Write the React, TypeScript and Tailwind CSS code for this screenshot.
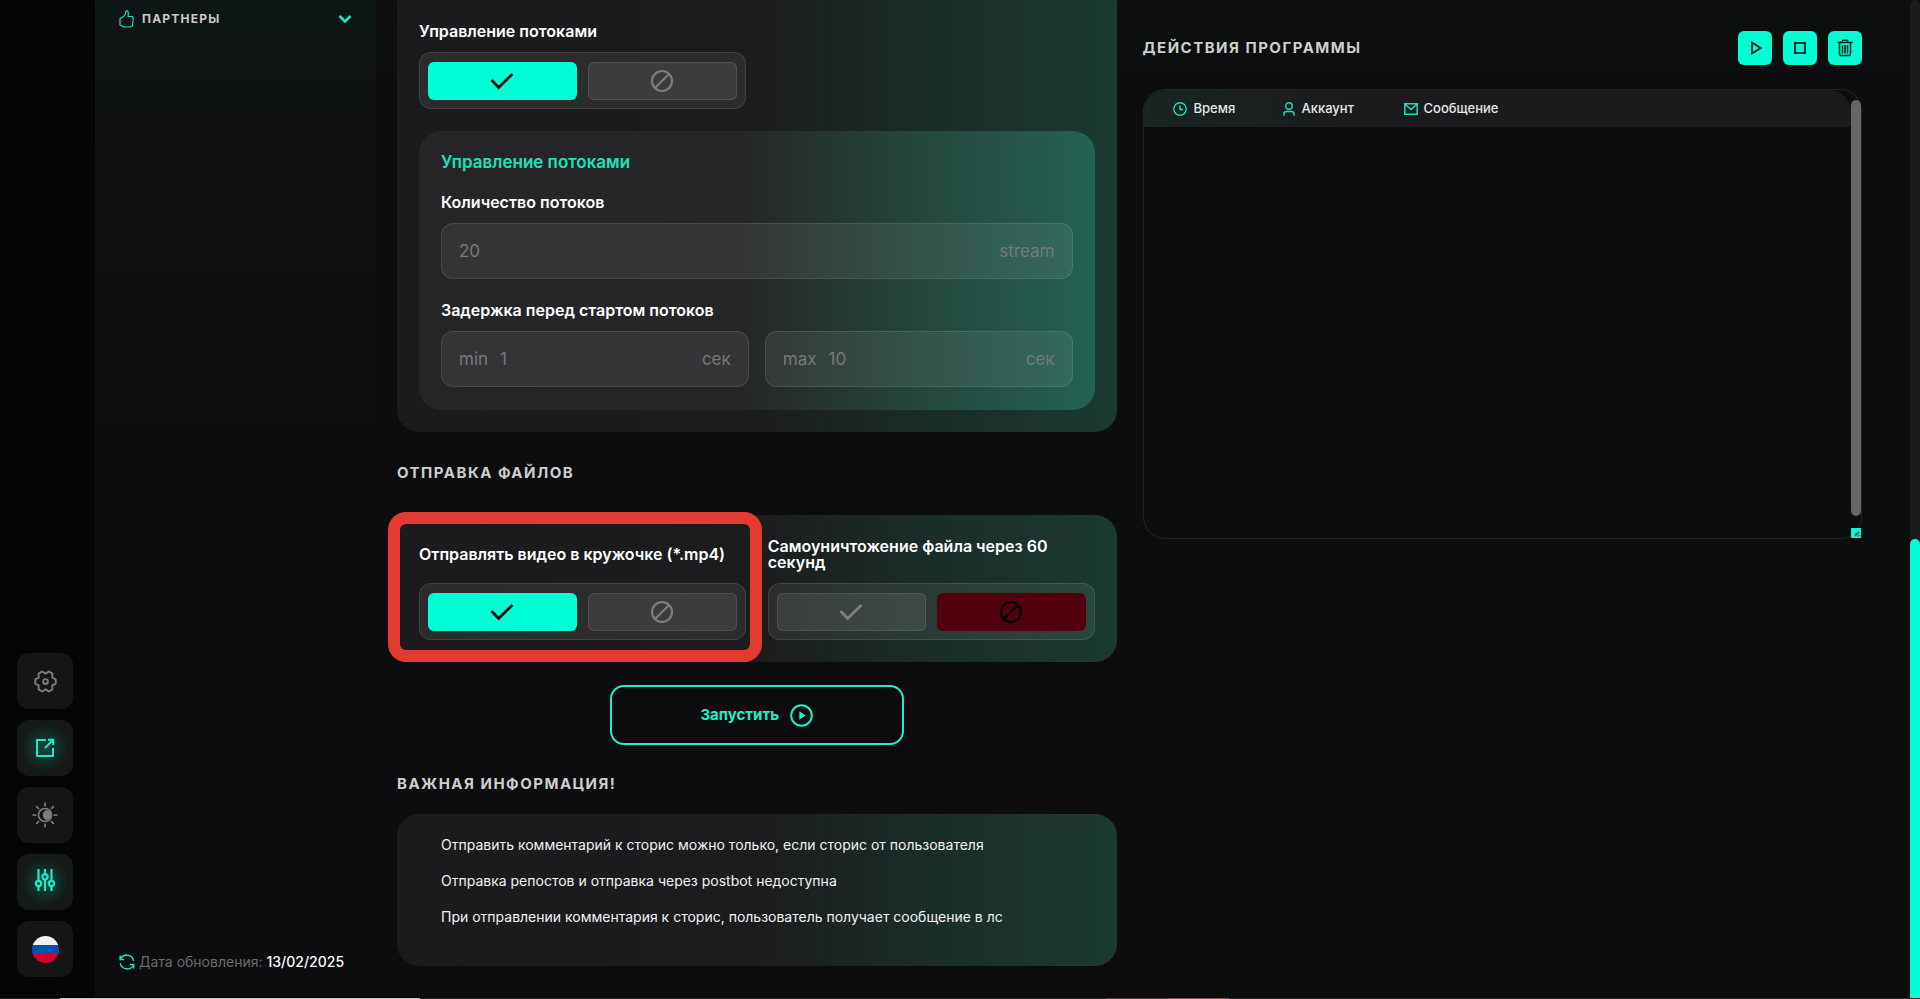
import React, { useState } from 'react';

function CheckIcon() {
  return (
    <svg width="24" height="18" viewBox="0 0 24 18" fill="none" stroke="currentColor" strokeWidth="2.8" aria-hidden="true">
      <path d="M1.5 8 L8.6 15.4 L22.5 2" strokeLinejoin="miter" />
    </svg>
  );
}

function BanIcon() {
  return (
    <svg width="24" height="24" viewBox="0 0 24 24" fill="none" stroke="currentColor" strokeWidth="2.2" aria-hidden="true">
      <circle cx="12" cy="12" r="10" />
      <path d="M5 19 L19 5" />
    </svg>
  );
}

function Toggle({ label, initial }: { label: string; initial: boolean }) {
  const [on, setOn] = useState(initial);
  const idle = 'border border-white/10 bg-white/[0.08] text-[#7d7d7d]';
  return (
    <div role="group" aria-label={label} className="grid h-[57px] grid-cols-2 items-center gap-[11px] rounded-xl border border-white/10 bg-white/[0.07] px-2">
      <button
        type="button"
        aria-label="Включить"
        aria-pressed={on}
        onClick={() => setOn(true)}
        className={`flex h-[38px] items-center justify-center rounded-md ${on ? 'bg-[#00ffd5] text-[#0d0d0f]' : idle}`}
      >
        <CheckIcon />
      </button>
      <button
        type="button"
        aria-label="Выключить"
        aria-pressed={!on}
        onClick={() => setOn(false)}
        className={`flex h-[38px] items-center justify-center rounded-md ${on ? idle : 'bg-[#52000e] text-black'}`}
      >
        <BanIcon />
      </button>
    </div>
  );
}

function Field({ id, prefix, placeholder, unit, label }: { id: string; prefix?: string; placeholder: string; unit: string; label?: string }) {
  return (
    <div className="flex h-14 min-w-0 flex-1 items-center gap-3 rounded-xl border border-white/10 bg-white/[0.07] px-[17px] pt-px text-[17px] text-[#77797a]">
      {prefix && <label htmlFor={id}>{prefix}</label>}
      <input
        id={id}
        aria-label={label}
        placeholder={placeholder}
        className="min-w-0 flex-1 bg-transparent text-white outline-none placeholder:text-[#77797a]"
      />
      <span>{unit}</span>
    </div>
  );
}

function SectionTitle({ children }: { children: React.ReactNode }) {
  return <h2 className="text-[15px] leading-6 font-bold tracking-widest text-[#cfcfcf] uppercase">{children}</h2>;
}

function RailButton({ label, active, children }: { label: string; active?: boolean; children: React.ReactNode }) {
  return (
    <button
      type="button"
      aria-label={label}
      className={`flex size-14 items-center justify-center rounded-xl bg-[#151516] ${active ? 'bg-[radial-gradient(circle,#0b4a3e_0%,#151918_60%)] text-[#1fe9c4]' : 'text-[#7d7d7d]'}`}
    >
      {children}
    </button>
  );
}

function Rail() {
  return (
    <nav aria-label="Настройки" className="flex w-[95px] shrink-0 flex-col justify-end gap-[11px] bg-[#050505] pb-[21px] pl-[17px]">
      <RailButton label="Настройки">
        <svg width="23" height="23" viewBox="0 0 24 24" fill="none" stroke="currentColor" strokeWidth="2" strokeLinejoin="round" aria-hidden="true">
          <path d="M22.7 9.8 V14.2 L19.1 16.1 L19.2 20.2 L15.4 22.4 L12 20.2 L8.6 22.4 L4.8 20.2 L4.9 16.1 L1.3 14.2 V9.8 L4.9 7.9 L4.8 3.8 L8.6 1.6 L12 3.8 L15.4 1.6 L19.2 3.8 L19.1 7.9 Z" />
          <circle cx="12" cy="12" r="2.5" />
        </svg>
      </RailButton>
      <RailButton label="Открыть в новом окне" active>
        <svg width="20" height="20" viewBox="0 0 20 20" fill="none" stroke="currentColor" strokeWidth="2" aria-hidden="true">
          <path d="M11 2 H2 V18 H18 V10" strokeLinejoin="round" />
          <path d="M10 10 L18 2 M13 1.8 H18.2 V7" />
        </svg>
      </RailButton>
      <RailButton label="Тема">
        <svg width="26" height="26" viewBox="0 0 26 26" fill="none" stroke="currentColor" strokeWidth="1.7" aria-hidden="true">
          <circle cx="13" cy="13" r="6.5" />
          <path d="M14.5 8 A5.4 5.4 0 0 1 14.5 18.2 A5.4 5.4 0 0 1 14.5 8 Z" fill="currentColor" stroke="none" />
          <circle cx="15.8" cy="13" r="4" fill="currentColor" stroke="none" />
          <path d="M13 .5 V4.5 M13 21.5 V25.5 M.5 13 H4.5 M21.5 13 H25.5 M4.2 4.2 L7 7 M19 19 L21.8 21.8 M4.2 21.8 L7 19 M19 7 L21.8 4.2" />
        </svg>
      </RailButton>
      <RailButton label="Параметры" active>
        <svg width="20" height="24" viewBox="0 0 20 24" fill="none" stroke="currentColor" strokeWidth="2.2" className="mb-1" aria-hidden="true">
          <path d="M3.5 1 V12.5 M3.5 18 V23 M10 1 V6 M10 11.5 V23 M16.5 1 V12.5 M16.5 18 V23" />
          <circle cx="3.5" cy="15.5" r="2.6" />
          <circle cx="10" cy="8.8" r="2.6" />
          <circle cx="16.5" cy="15.5" r="2.6" />
        </svg>
      </RailButton>
      <RailButton label="Русский язык">
        <span className="flex size-[27px] flex-col overflow-hidden rounded-full">
          <span className="flex-1 bg-[#f0f0f0]" />
          <span className="flex-1 bg-[#0052b4]" />
          <span className="flex-1 bg-[#d80027]" />
        </span>
      </RailButton>
    </nav>
  );
}

function Sidebar() {
  return (
    <aside className="flex w-[281px] shrink-0 flex-col justify-between bg-[linear-gradient(180deg,#0e1616_0%,#0f1112_12%,#0d0d0f_45%)] px-6 pt-2 pb-6">
      <button type="button" className="flex h-[22px] items-center text-[#1fe0bd]">
        <svg width="15" height="18" viewBox="0 0 15 18" fill="none" stroke="currentColor" strokeWidth="1.2" strokeLinejoin="round" aria-hidden="true">
          <path d="M1 8.5 L4.5 6.5 L6.5 4 L7 1 L8.5 .8 L9.3 2.5 L9.2 6.5 H13.5 L14.2 8 L13.5 16 L11 17 H5 L1 15 Z" />
        </svg>
        <span className="ml-2 flex-1 text-left text-xs font-bold tracking-widest text-[#c9c9c9]">ПАРТНЕРЫ</span>
        <svg width="14" height="10" viewBox="0 0 14 10" fill="none" stroke="#20e3c2" strokeWidth="2.6" aria-hidden="true">
          <path d="M1.5 2 L7 7.5 L12.5 2" />
        </svg>
      </button>
      <p className="flex items-center text-sm leading-6 whitespace-nowrap text-[#6a6a6c]">
        <svg width="16" height="16" viewBox="0 0 16 16" fill="none" stroke="#1fdcb9" strokeWidth="1.5" className="mr-1 shrink-0" aria-hidden="true">
          <path d="M1.2 1.5 V5.5 H5.2 M1.4 5.3 A7 7 0 0 1 14.7 7 M14.8 14.5 V10.5 H10.8 M14.6 10.7 A7 7 0 0 1 1.3 9" />
        </svg>
        <span>Дата обновления:</span>
        <time dateTime="2025-02-13" className="ml-1 font-medium text-white">13/02/2025</time>
      </p>
    </aside>
  );
}

function ActionButton({ label, children }: { label: string; children: React.ReactNode }) {
  return (
    <button type="button" aria-label={label} className="flex size-[34px] items-center justify-center rounded-md bg-[#00ffd5] text-[#08251f]">
      {children}
    </button>
  );
}

function LogPanel() {
  return (
    <section className="min-w-0 flex-1 pt-[31px]">
      <div className="flex items-center justify-between">
        <SectionTitle>Действия программы</SectionTitle>
        <div className="flex gap-[11px]">
          <ActionButton label="Запуск">
            <svg width="12" height="14" viewBox="0 0 12 14" fill="none" stroke="currentColor" strokeWidth="1.9" className="ml-0.5" aria-hidden="true">
              <path d="M2 1.5 L10.5 7 L2 12.5 Z" />
            </svg>
          </ActionButton>
          <ActionButton label="Стоп">
            <svg width="12" height="12" viewBox="0 0 12 12" fill="none" stroke="currentColor" strokeWidth="1.8" aria-hidden="true">
              <rect x="1" y="1" width="10" height="10" />
            </svg>
          </ActionButton>
          <ActionButton label="Очистить">
            <svg width="16" height="18" viewBox="0 0 16 18" fill="none" stroke="currentColor" strokeWidth="1.5" aria-hidden="true">
              <path d="M.5 3.5 H15.5 M5 3 L5.7 1.2 H10.3 L11 3 M2.5 4 V14.5 Q2.5 16.6 4.5 16.6 H11.5 Q13.5 16.6 13.5 14.5 V4 M5.5 6 V14.5 M8 6 V14.5 M10.5 6 V14.5" />
            </svg>
          </ActionButton>
        </div>
      </div>
      <div className="mt-6 flex h-[450px] rounded-[22px] border border-[#242426]">
        <div className="min-w-0 flex-1">
          <div className="rounded-t-[22px] bg-[linear-gradient(90deg,#182521_0%,#1b1b1d_30%)]">
            <table className="w-full table-fixed text-left text-[13px] text-[#e6e6e6]">
              <thead>
                <tr className="h-[37px]">
                  <th className="w-[139px] pl-[29px] font-medium">
                    <span className="flex items-center gap-[7px]">
                      <svg width="14" height="14" viewBox="0 0 14 14" fill="none" stroke="#1fdcb9" strokeWidth="1.4" aria-hidden="true">
                        <circle cx="7" cy="7" r="6.2" />
                        <path d="M7 3.5 V7.5 H10" />
                      </svg>
                      Время
                    </span>
                  </th>
                  <th className="w-[121px] font-medium">
                    <span className="flex items-center gap-[7px]">
                      <svg width="12" height="14" viewBox="0 0 12 14" fill="none" stroke="#1fdcb9" strokeWidth="1.4" aria-hidden="true">
                        <circle cx="6" cy="4" r="3.3" />
                        <path d="M1 13.8 V12 Q1 9.5 3.5 9.5 H8.5 Q11 9.5 11 12 V13.8" />
                      </svg>
                      Аккаунт
                    </span>
                  </th>
                  <th className="font-medium">
                    <span className="flex items-center gap-[6px]">
                      <svg width="14" height="12" viewBox="0 0 14 12" fill="none" stroke="#1fdcb9" strokeWidth="1.5" aria-hidden="true">
                        <path d="M.8 .8 H13.2 V11.2 H.8 Z M1.5 1.5 L7 6.5 L12.5 1.5" />
                      </svg>
                      Сообщение
                    </span>
                  </th>
                </tr>
              </thead>
            </table>
          </div>
        </div>
        <div aria-hidden="true" className="flex w-[10px] flex-col justify-between pt-[10px]">
          <span className="h-[416px] rounded-full bg-[#666668]" />
          <svg width="10" height="10" viewBox="0 0 10 10">
            <rect width="10" height="10" fill="#10f5cd" />
            <path d="M4 8 L8 4 M7 8.5 L8.5 7 M4.5 6 L6 5" stroke="#08584b" strokeWidth="1.4" />
          </svg>
        </div>
      </div>
    </section>
  );
}

const cardBg = 'bg-[linear-gradient(90deg,#1b1b1d_0%,#1c1c1e_50%,#1b2a27_70%,#1b3a31_100%)]';

const notes = [
  'Отправить комментарий к сторис можно только, если сторис от пользователя',
  'Отправка репостов и отправка через postbot недоступна',
  'При отправлении комментария к сторис, пользователь получает сообщение в лс',
];

function Settings() {
  return (
    <div className="flex min-w-0 flex-1 flex-col">
      <section className={`rounded-b-[22px] px-[22px] pb-[22px] ${cardBg}`}>
        <div className="grid grid-cols-2 gap-[22px] pt-[19px]">
          <div>
            <h3 className="mb-[9px] text-base leading-6 font-semibold text-white">Управление потоками</h3>
            <Toggle label="Управление потоками" initial={true} />
          </div>
        </div>
        <div className="mt-[22px] rounded-[22px] bg-[linear-gradient(90deg,#252527_0%,#262628_48%,#25473e_75%,#236252_100%)] px-[22px] pt-[19px] pb-[23px]">
          <h3 className="text-[17px] leading-6 font-semibold text-[#1fe0b8]">Управление потоками</h3>
          <label htmlFor="threads" className="mt-4 mb-[9px] block text-base leading-6 font-semibold text-white">Количество потоков</label>
          <Field id="threads" placeholder="20" unit="stream" />
          <h4 className="mt-[19px] mb-[9px] text-base leading-6 font-semibold text-white">Задержка перед стартом потоков</h4>
          <div className="flex gap-4">
            <Field id="delay-min" prefix="min" placeholder="1" unit="сек" />
            <Field id="delay-max" prefix="max" placeholder="10" unit="сек" />
          </div>
        </div>
      </section>

      <div className="mt-[29px]">
        <SectionTitle>Отправка файлов</SectionTitle>
      </div>
      <section className={`relative mt-[30px] grid grid-cols-2 gap-[22px] rounded-[22px] p-[22px] ${cardBg}`}>
        <div>
          <h3 className="mb-3 flex h-[34px] items-center text-base leading-4 font-semibold text-white">Отправлять видео в кружочке (*.mp4)</h3>
          <Toggle label="Отправлять видео в кружочке" initial={true} />
        </div>
        <div>
          <h3 className="mb-3 flex h-[34px] items-center text-base leading-4 font-semibold text-white">Самоуничтожение файла через 60 секунд</h3>
          <Toggle label="Самоуничтожение файла" initial={false} />
        </div>
        <div className="pointer-events-none absolute -top-[3px] right-[355px] bottom-0 -left-[9px] rounded-[18px] border-[12px] border-[#e43b30]" />
      </section>

      <button
        type="button"
        className="mt-[23px] flex h-[60px] w-[294px] items-center justify-center gap-[11px] self-center rounded-[14px] border-2 border-[#1fefcb] text-[15px] font-bold text-[#1fefcb]"
      >
        Запустить
        <svg width="23" height="23" viewBox="0 0 23 23" fill="none" stroke="currentColor" strokeWidth="2" aria-hidden="true">
          <circle cx="11.5" cy="11.5" r="10.3" />
          <path d="M9.3 7.3 L15.7 11.5 L9.3 15.7 Z" fill="currentColor" stroke="none" />
        </svg>
      </button>

      <div className="mt-[27px]">
        <SectionTitle>Важная информация!</SectionTitle>
      </div>
      <section className={`mt-[18px] rounded-[22px] px-11 pt-[19px] pb-[37px] ${cardBg}`}>
        <ul className="flex flex-col gap-3 text-sm leading-6 text-[#f2f2f2]">
          {notes.map((note) => (
            <li key={note}>{note}</li>
          ))}
        </ul>
      </section>
    </div>
  );
}

export default function App() {
  return (
    <div className="flex min-h-screen flex-col bg-[#0d0d0f] font-[Inter,'Noto_Sans',sans-serif]">
      <div className="flex flex-1">
        <Rail />
        <Sidebar />
        <main className="flex min-w-0 flex-1 gap-[26px] bg-[linear-gradient(180deg,#0d100e_0%,#0d0d0f_8%)] pr-12 pl-[21px]">
          <Settings />
          <LogPanel />
        </main>
        <div aria-hidden="true" className="flex w-[10px] flex-col justify-end rounded-t-full bg-[#1b1b1c]">
          <span className="h-[46%] rounded-t-full bg-[#00ffd5]" />
        </div>
      </div>
      <div aria-hidden="true" className="flex h-px bg-[#2a2123]">
        <span className="ml-[60px] w-[360px] bg-[#cfc6c8]" />
        <span className="ml-[686px] w-[62px] bg-[#4a4344]" />
        <span className="w-[61px] bg-[#7a5546]" />
      </div>
    </div>
  );
}
